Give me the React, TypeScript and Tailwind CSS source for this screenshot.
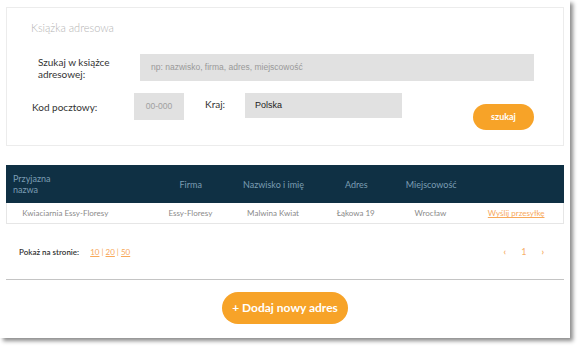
import React from "react";

const orange = "bg-[#f7a328]";

const columns = [
  { label: "Firma", value: "Essy-Floresy", w: "w-[82px]" },
  { label: "Nazwisko i imię", value: "Malwina Kwiat", w: "w-[84px]" },
  { label: "Adres", value: "Łąkowa 19", w: "w-[82px]" },
  { label: "Miejscowość", value: "Wrocław", w: "w-[68px]" },
];

export default function App() {
  return (
    <div className="w-[579px] h-[346px] bg-white font-['Lato',sans-serif]">
      <div className="w-[570px] h-[338px] bg-white shadow-[3px_3px_4px_rgba(0,0,0,0.45)] px-[6px] pt-[7px] flex flex-col">
        {/* Search card */}
        <div className="h-[139px] border border-[#ececec] flex flex-col">
          <div className="pl-[24px] pt-[12px] text-[11px] leading-[16px] font-light text-[#b3b3b3]">
            Książka adresowa
          </div>

          <div className="mt-[18px] pl-[31px] flex items-center">
            <div className="w-[102px] text-[10px] leading-[12px] text-[#333]">
              Szukaj w książce
              <br />
              adresowej:
            </div>
            <div className="w-[394px] h-[27px] bg-[#e1e1e1] flex items-center pl-[11px] font-['Liberation_Sans',sans-serif] text-[8.5px] text-[#999]">
              np: nazwisko, firma, adres, miejscowość
            </div>
          </div>

          <div className="mt-[12px] pl-[25px] flex items-start">
            <div className="w-[102px] h-[27px] flex items-center pt-[2px] text-[10px] text-[#333]">
              Kod pocztowy:
            </div>
            <div className="w-[50px] h-[27px] bg-[#e1e1e1] flex items-center justify-center font-['Liberation_Sans',sans-serif] text-[8.5px] text-[#a0a0a0]">
              00-000
            </div>
            <div className="ml-[21px] w-[40px] h-[22px] flex items-center text-[10px] text-[#333]">
              Kraj:
            </div>
            <div className="w-[157px] h-[25px] bg-[#e1e1e1] flex items-center pl-[10px] font-['Liberation_Sans',sans-serif] text-[9px] text-[#222]">
              Polska
            </div>
            <button
              className={`ml-[71px] mt-[11px] w-[61px] h-[26px] rounded-full ${orange} text-white text-[9px] font-bold`}
            >
              szukaj
            </button>
          </div>
        </div>

        {/* Table */}
        <div className="mt-[19px]">
          <div className="h-[38px] bg-[#0f3044] flex items-center text-[9px] leading-[11px] text-[#7b9db3]">
            <div className="w-[118px] pl-[7px]">
              Przyjazna
              <br />
              nazwa
            </div>
            <div className="w-[26px]" />
            {columns.map((c) => (
              <div key={c.label} className={`${c.w} text-center`}>
                {c.label}
              </div>
            ))}
            <div className="w-[99px]" />
          </div>
          <div className="h-[21px] border-x border-b border-[#e6e6e6] flex items-center text-[8px] text-[#8a8a8a]">
            <div className="w-[117px] text-center">Kwiaciarnia Essy-Floresy</div>
            <div className="w-[26px]" />
            {columns.map((c) => (
              <div key={c.label} className={`${c.w} text-center`}>
                {c.value}
              </div>
            ))}
            <div className="w-[5px]" />
            <a className="w-[94px] text-center text-[#f7a85a] underline">Wyślij przesyłkę</a>
          </div>
        </div>

        {/* Pagination */}
        <div className="mt-[18px] h-[20px] flex items-center pl-[13px] text-[8px]">
          <span className="font-semibold text-[#333]">Pokaż na stronie:</span>
          <span className="ml-[11px] text-[#f7a85a]">
            <a className="underline">10</a> | <a className="underline">20</a> |{" "}
            <a className="underline">50</a>
          </span>
          <div className="ml-auto mr-[20px] flex items-center gap-[15px] text-[#f7b06a] text-[9px] font-bold">
            <span>‹</span>
            <span className="font-normal">1</span>
            <span>›</span>
          </div>
        </div>

        <div className="mt-[17px] h-px bg-[#c4c4c4]" />

        <button
          className={`mt-[12px] self-center w-[126px] h-[32px] rounded-full ${orange} text-white text-[12px] font-bold`}
        >
          + Dodaj nowy adres
        </button>
      </div>
    </div>
  );
}
